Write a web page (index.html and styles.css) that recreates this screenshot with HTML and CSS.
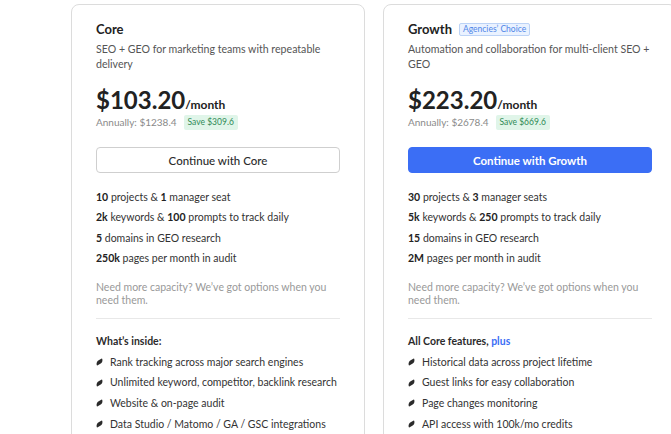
FILE: index.html
```html
<!DOCTYPE html>
<html lang="en">
<head>
    <meta charset="UTF-8">
    <meta name="viewport" content="width=device-width, initial-scale=1.0">
    <title>Plans</title>
    <link rel="stylesheet" href="styles.css">
</head>
<body>
    <div class="plans">
        <!-- Core plan -->
        <div class="plan">
            <div class="plan-head">
                <div class="plan-name">Core</div>
            </div>
            <div class="plan-desc">SEO + GEO for marketing teams with repeatable delivery</div>

            <div class="price"><span class="amount">$103.20</span><span class="period">/month</span></div>
            <div class="annual">
                <span>Annually: $1238.4</span>
                <span class="save">Save $309.6</span>
            </div>

            <button class="btn">Continue with Core</button>

            <ul class="limits">
                <li><b>10</b> projects &amp; <b>1</b> manager seat</li>
                <li><b>2k</b> keywords &amp; <b>100</b> prompts to track daily</li>
                <li><b>5</b> domains in GEO research</li>
                <li><b>250k</b> pages per month in audit</li>
            </ul>

            <p class="more">Need more capacity? We’ve got options when you need them.</p>

            <div class="features-title">What’s inside:</div>
            <ul class="features">
                <li>Rank tracking across major search engines</li>
                <li>Unlimited keyword, competitor, backlink research</li>
                <li>Website &amp; on-page audit</li>
                <li>Data Studio / Matomo / GA / GSC integrations</li>
            </ul>
        </div>

        <!-- Growth plan -->
        <div class="plan">
            <div class="plan-head">
                <div class="plan-name">Growth</div>
                <span class="tag">Agencies’ Choice</span>
            </div>
            <div class="plan-desc">Automation and collaboration for multi-client SEO + GEO</div>

            <div class="price"><span class="amount">$223.20</span><span class="period">/month</span></div>
            <div class="annual">
                <span>Annually: $2678.4</span>
                <span class="save">Save $669.6</span>
            </div>

            <button class="btn btn-primary">Continue with Growth</button>

            <ul class="limits">
                <li><b>30</b> projects &amp; <b>3</b> manager seats</li>
                <li><b>5k</b> keywords &amp; <b>250</b> prompts to track daily</li>
                <li><b>15</b> domains in GEO research</li>
                <li><b>2M</b> pages per month in audit</li>
            </ul>

            <p class="more">Need more capacity? We’ve got options when you need them.</p>

            <div class="features-title">All Core features, <span class="plus">plus</span></div>
            <ul class="features">
                <li>Historical data across project lifetime</li>
                <li>Guest links for easy collaboration</li>
                <li>Page changes monitoring</li>
                <li>API access with 100k/mo credits</li>
            </ul>
        </div>
    </div>
</body>
</html>
```

FILE: styles.css
```css
body {
    margin: 0;
    background: #ffffff;
    font-family: 'Lato', 'Noto Sans', sans-serif;
    color: #2b2b2b;
    overflow: hidden;
}

.plans {
    display: flex;
    gap: 18px;
    padding: 4px 0 0 71px;
}

.plan {
    flex: 0 0 294px;
    box-sizing: border-box;
    height: 460px;
    padding: 14px 24px 0 24px;
    border: 1px solid #dcdcdc;
    border-radius: 8px;
}

.plan-head {
    display: flex;
    align-items: center;
    gap: 7px;
    height: 20px;
}

.plan-name {
    font-size: 13px;
    font-weight: 700;
    color: #222;
}

.tag {
    font-size: 8.5px;
    color: #4f86e8;
    background: #eaf2ff;
    border: 1px solid #bcd3f6;
    border-radius: 2px;
    padding: 0 3px;
    line-height: 11px;
}

.plan-desc {
    margin-top: 3px;
    font-size: 10.6px;
    line-height: 15px;
    color: #555;
}

.price {
    margin-top: 14px;
    line-height: 28px;
    color: #222;
}

.amount {
    font-size: 24px;
    font-weight: 700;
}

.period {
    font-size: 12px;
    font-weight: 700;
}

.annual {
    display: flex;
    align-items: center;
    gap: 7px;
    margin-top: -4px;
    font-size: 10px;
    color: #8a8a8a;
    line-height: 15px;
}

.save {
    font-size: 8.5px;
    color: #2e8a55;
    background: #e0f5e9;
    border-radius: 2px;
    padding: 2px 4px;
    line-height: 11px;
}

.btn {
    display: block;
    width: 100%;
    height: 26px;
    margin-top: 17px;
    border: 1px solid #cfcfcf;
    border-radius: 4px;
    background: #fff;
    font-family: inherit;
    font-size: 11.5px;
    font-weight: 500;
    color: #2b2b2b;
}

.btn-primary {
    background: #3b6ef5;
    border-color: #3b6ef5;
    color: #fff;
    font-weight: 700;
}

.limits {
    list-style: none;
    margin: 14px 0 0;
    padding: 0;
    font-size: 10.5px;
    line-height: 20.4px;
    color: #333;
}

.limits b {
    color: #222;
}

.more {
    margin: 12px 0 0;
    padding-bottom: 10px;
    font-size: 10.5px;
    line-height: 13.5px;
    color: #999;
    border-bottom: 1px solid #e8e8e8;
}

.features-title {
    margin-top: 15px;
    font-size: 10.5px;
    font-weight: 700;
    color: #2b2b2b;
    line-height: 14px;
}

.plus {
    color: #3b6ef5;
}

.features {
    list-style: none;
    margin: 4px 0 0;
    padding: 0;
    font-size: 10.5px;
    line-height: 20.7px;
    color: #333;
}

.features li {
    display: flex;
    align-items: center;
    gap: 7px;
}

/* small slanted marker in front of each feature */
.features li::before {
    content: "";
    flex: 0 0 7px;
    height: 4px;
    background: #2b2b2b;
    border-radius: 3px 1px 3px 1px;
    transform: rotate(-30deg) skewX(-20deg);
}
```
